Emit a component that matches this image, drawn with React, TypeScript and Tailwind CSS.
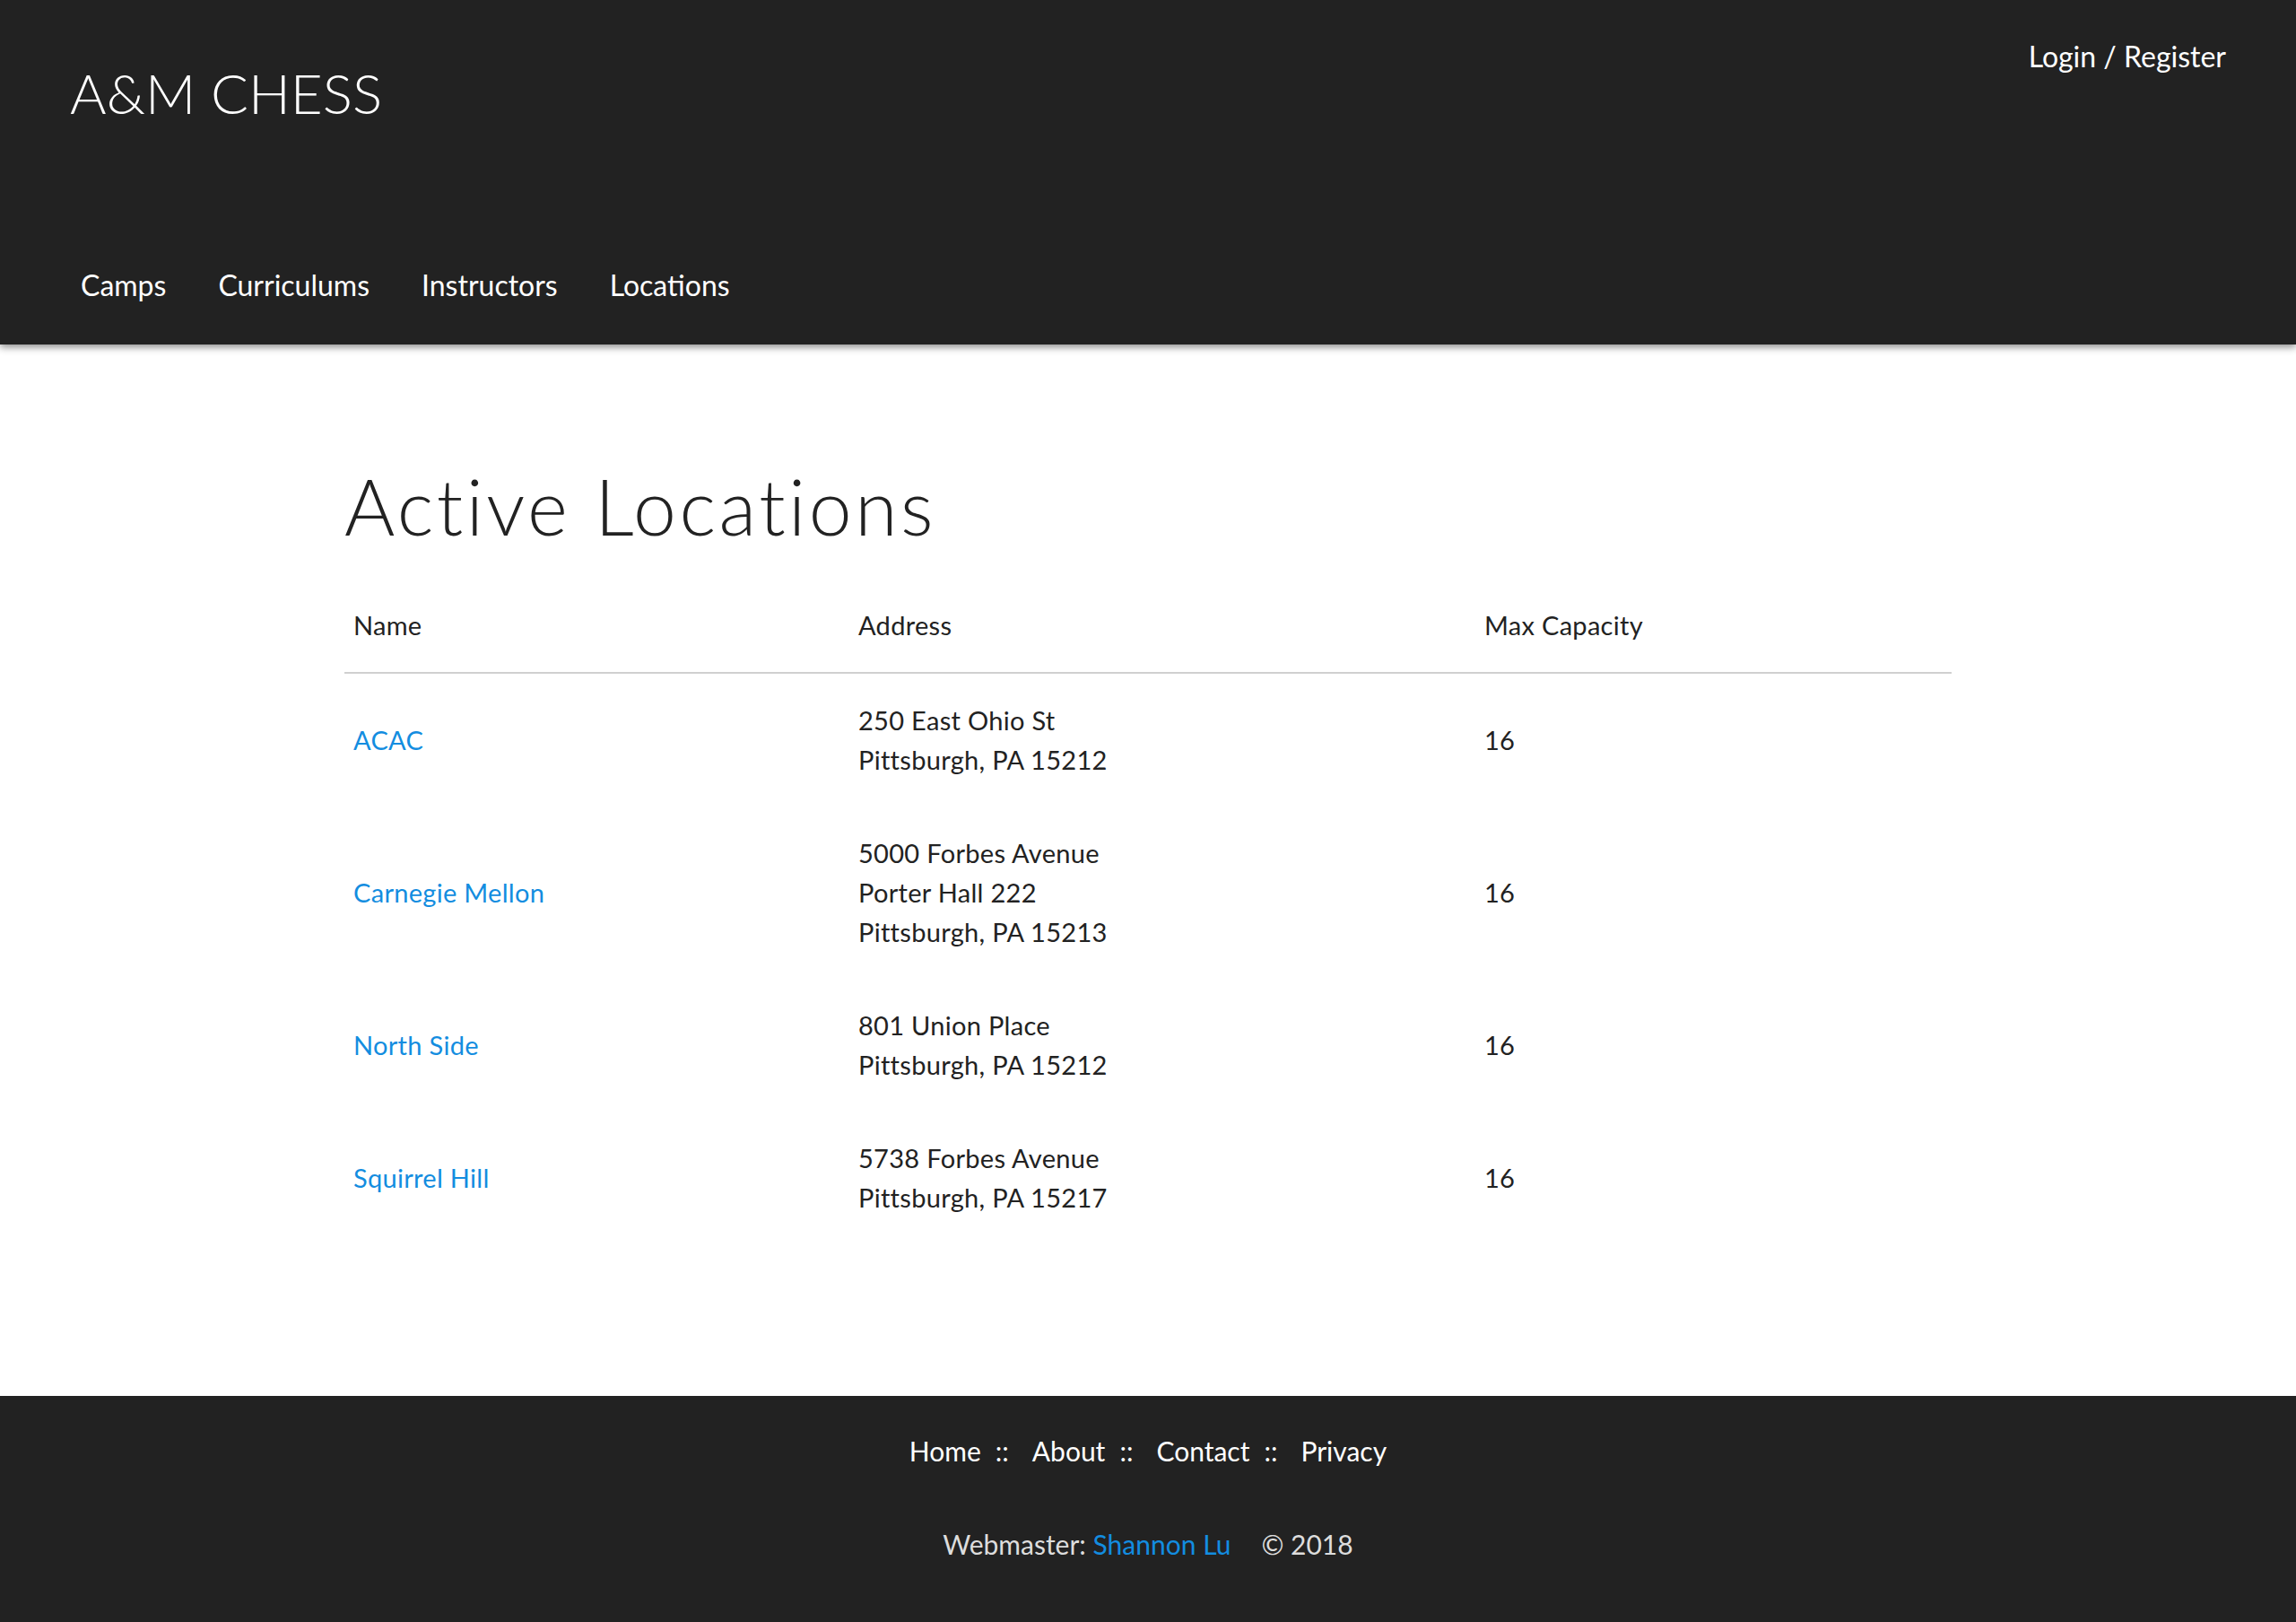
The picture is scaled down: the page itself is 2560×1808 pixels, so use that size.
import React from 'react';

const locations = [
  { name: 'ACAC', address: ['250 East Ohio St', 'Pittsburgh, PA 15212'], capacity: 16 },
  { name: 'Carnegie Mellon', address: ['5000 Forbes Avenue', 'Porter Hall 222', 'Pittsburgh, PA 15213'], capacity: 16 },
  { name: 'North Side', address: ['801 Union Place', 'Pittsburgh, PA 15212'], capacity: 16 },
  { name: 'Squirrel Hill', address: ['5738 Forbes Avenue', 'Pittsburgh, PA 15217'], capacity: 16 },
];

const navLinks = ['Camps', 'Curriculums', 'Instructors', 'Locations'];
const footerLinks = ['Home', 'About', 'Contact', 'Privacy'];

export default function App() {
  return (
    <div className="min-h-[1808px] flex flex-col bg-white text-[#222222] font-['Lato','Open_Sans',sans-serif]">
      {/* Header */}
      <header className="bg-[#222222] text-white px-[78px] pt-[47px] pb-[50px] shadow-[0_3px_8px_rgba(0,0,0,0.45)] relative z-10">
        <div className="flex justify-between items-start">
          <a href="#" className="mt-[25px] text-[62px] leading-none font-light text-white">
            A&amp;M CHESS
          </a>
          <a href="#" className="text-[32px] leading-none text-white">
            Login / Register
          </a>
        </div>
        <nav className="mt-[168px] flex gap-[58px] pl-[12px]">
          {navLinks.map((link) => (
            <a key={link} href="#" className="text-[32px] leading-none text-white">
              {link}
            </a>
          ))}
        </nav>
      </header>

      {/* Main content */}
      <main className="flex-1 pt-[137px] pb-[167px]">
        <div className="w-[70%] mx-auto">
          <h1 className="text-[86px] leading-none tracking-[3.5px] font-light text-[#222222]">Active Locations</h1>
          <table className="mt-[38px] w-full table-fixed border-collapse text-[29px] leading-[44px] tracking-[0.3px]">
            <colgroup>
              <col className="w-[561px]" />
              <col className="w-[698px]" />
              <col />
            </colgroup>
            <thead>
              <tr className="border-b-2 border-[#d0d0d0]">
                <th className="text-left font-normal px-[10px] py-[30px]">Name</th>
                <th className="text-left font-normal px-[12px] py-[30px]">Address</th>
                <th className="text-left font-normal px-[12px] py-[30px]">Max Capacity</th>
              </tr>
            </thead>
            <tbody>
              {locations.map((loc) => (
                <tr key={loc.name}>
                  <td className="align-middle px-[10px] py-[30px]">
                    <a href="#" className="text-[#138de0]">{loc.name}</a>
                  </td>
                  <td className="align-middle px-[12px] py-[30px]">
                    {loc.address.map((line) => (
                      <div key={line}>{line}</div>
                    ))}
                  </td>
                  <td className="align-middle px-[12px] py-[30px]">{loc.capacity}</td>
                </tr>
              ))}
            </tbody>
          </table>
        </div>
      </main>

      {/* Footer */}
      <footer className="bg-[#222222] pt-[46px] pb-[72px] flex flex-col items-center">
        <div className="flex items-center text-[30px] leading-none text-white">
          {footerLinks.map((link, index) => (
            <React.Fragment key={link}>
              <a href="#" className="text-white">{link}</a>
              {index < footerLinks.length - 1 && (
                <span className="ml-[16px] mr-[26px]">::</span>
              )}
            </React.Fragment>
          ))}
        </div>
        <p className="mt-[74px] text-[30px] leading-none text-[#dddddd]">
          Webmaster: <a href="#" className="text-[#138de0]">Shannon Lu</a>
          <span className="ml-[34px]">&copy; 2018</span>
        </p>
      </footer>
    </div>
  );
}
